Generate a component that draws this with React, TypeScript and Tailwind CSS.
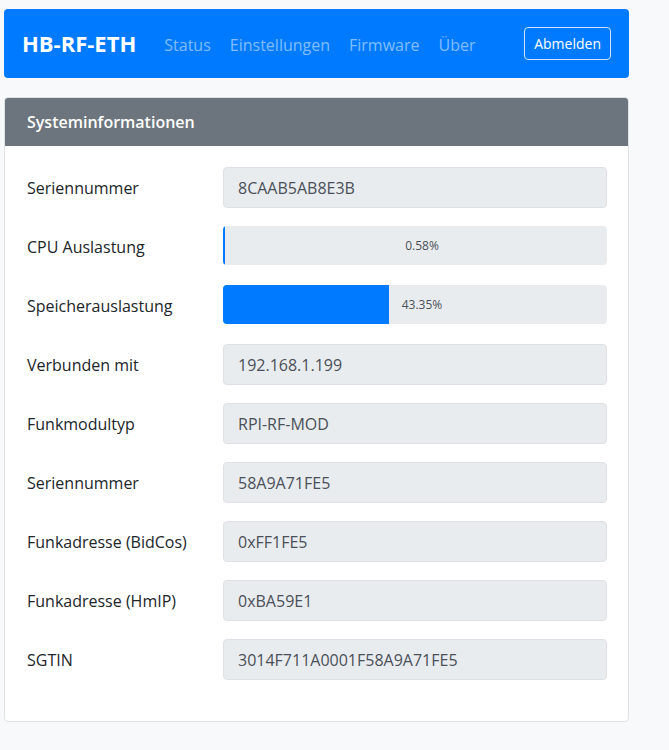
import React from 'react';

const font = { fontFamily: '"Open Sans", "Noto Sans", sans-serif' };

type Row = { label: string; value?: string; progress?: number };

const rows: Row[] = [
  { label: 'Seriennummer', value: '8CAAB5AB8E3B' },
  { label: 'CPU Auslastung', progress: 0.58 },
  { label: 'Speicherauslastung', progress: 43.35 },
  { label: 'Verbunden mit', value: '192.168.1.199' },
  { label: 'Funkmodultyp', value: 'RPI-RF-MOD' },
  { label: 'Seriennummer', value: '58A9A71FE5' },
  { label: 'Funkadresse (BidCos)', value: '0xFF1FE5' },
  { label: 'Funkadresse (HmIP)', value: '0xBA59E1' },
  { label: 'SGTIN', value: '3014F711A0001F58A9A71FE5' },
];

function Progress({ value }: { value: number }) {
  return (
    <div className="relative h-[39px] rounded-[4px] bg-[#e9ecef] overflow-hidden">
      <div className="h-full bg-[#007bff]" style={{ width: `${value}%` }} />
      <span className="absolute inset-0 flex items-center justify-center pl-[14px] text-[12px] text-[#495057]">
        {value.toFixed(2)}%
      </span>
    </div>
  );
}

export default function App() {
  return (
    <div className="min-h-[750px] bg-[#f8f9fa] pt-[9px] pl-[4px]" style={font}>
      <div className="w-[625px]">
        <nav className="flex items-center h-[69px] rounded-[4px] bg-[#007bff] pl-[18px] pr-[18px]">
          <span className="text-[22px] font-bold text-white mr-[28px]">HB-RF-ETH</span>
          <div className="flex gap-[19px] text-[16px] text-[#80bdff] mt-[2px]">
            <span>Status</span>
            <span>Einstellungen</span>
            <span>Firmware</span>
            <span>Über</span>
          </div>
          <button className="ml-auto h-[33px] px-[9px] rounded-[4px] border border-[#cce4ff] text-[14px] text-white">
            Abmelden
          </button>
        </nav>

        <div className="mt-[19px] rounded-[4px] border border-[#dfe2e5] bg-white overflow-hidden">
          <div className="h-[48px] flex items-center px-[22px] bg-[#6c757d] text-white text-[16px] font-semibold">
            Systeminformationen
          </div>
          <div className="pt-[21px] pb-[41px] pl-[22px] pr-[21px] flex flex-col gap-[18px]">
            {rows.map((r, i) => (
              <div key={i} className="flex items-center h-[41px]">
                <div className="w-[196px] shrink-0 text-[16px] text-[#212529]">{r.label}</div>
                <div className="flex-1 self-start">
                  {r.progress !== undefined ? (
                    <Progress value={r.progress} />
                  ) : (
                    <div className="h-[41px] flex items-center px-[14px] rounded-[4px] border border-[#dde1e5] bg-[#e9ecef] text-[16px] text-[#495057]">
                      {r.value}
                    </div>
                  )}
                </div>
              </div>
            ))}
          </div>
        </div>
      </div>
    </div>
  );
}
